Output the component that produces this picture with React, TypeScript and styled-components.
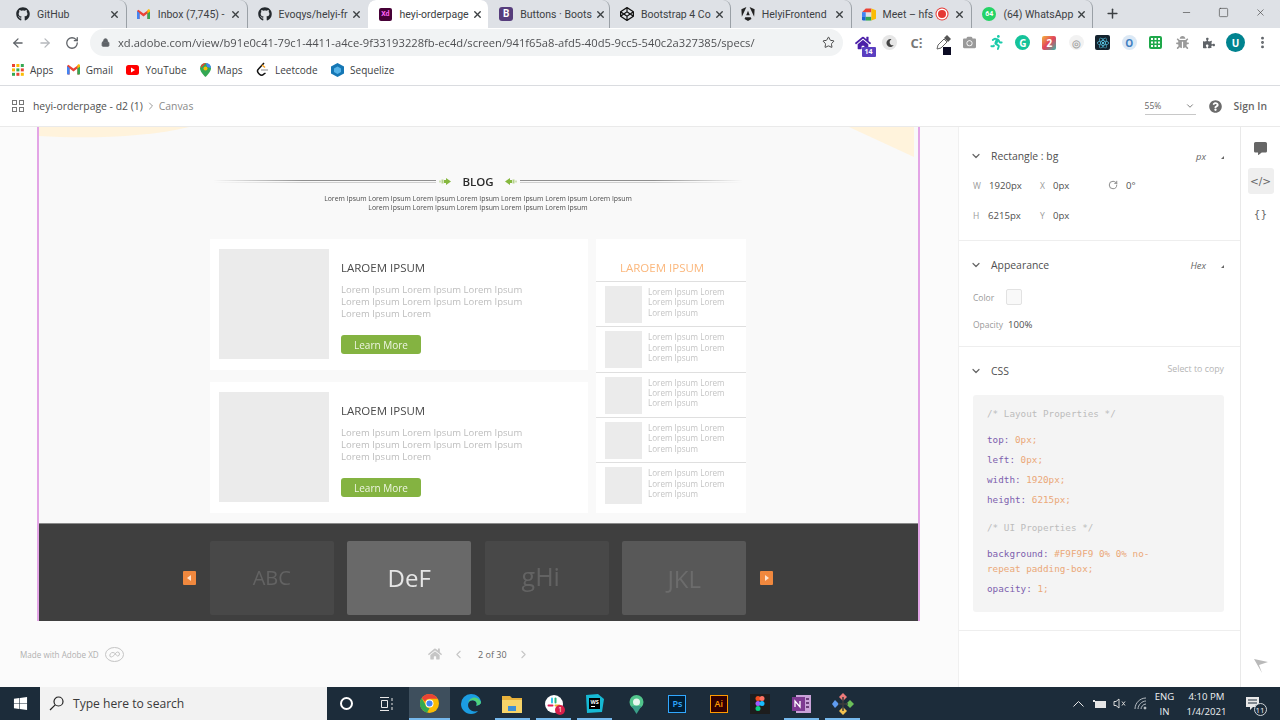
import React from "react";
import styled, { createGlobalStyle } from "styled-components";
import { ArrowLeft, ArrowRight, ChevronDown, ChevronLeft, ChevronRight, Lock, Minus, MoreVertical, Plus, RotateCw, Square, Star, X } from "lucide-react";
import { FaBug, FaCamera, FaCodepen, FaCommentAlt, FaGithub, FaHome, FaMoon, FaPuzzlePiece, FaQuestionCircle, FaReact, FaRunning, FaWindows } from "react-icons/fa";
import { SiAngular } from "react-icons/si";

const GlobalStyle = createGlobalStyle`
    html, body { margin: 0; padding: 0; background: #fff; }
    * { box-sizing: border-box; }
    body { font-family: "Open Sans", "Noto Sans", sans-serif; color: #444; }
`;

const Screen = styled.div`
    width: 1280px;
    height: 720px;
    overflow: hidden;
    display: flex;
    flex-direction: column;
`;

/* browser chrome */
const TabStrip = styled.div`
    height: 28px;
    background: #dee1e6;
    display: flex;
    align-items: stretch;
    padding-left: 6px;
`;
const Tab = styled.div<{ $active?: boolean; $sep?: boolean }>`
    position: relative;
    width: 120.8px;
    display: flex;
    align-items: center;
    padding: 0 5px 0 10px;
    background: ${(p) => (p.$active ? "#fff" : "transparent")};
    border-radius: 8px 8px 0 0;
    border-right: 1px solid ${(p) => (p.$sep ? "#9aa0a6" : "transparent")};
    background-clip: padding-box;
    font-family: Roboto, "Open Sans", sans-serif;
    font-size: 10.5px;
    color: #3c4043;
`;
const TabIcon = styled.span`
    width: 14px;
    height: 14px;
    flex: none;
    display: flex;
    align-items: center;
    justify-content: center;
    font-size: 14px;
    margin-right: 7px;
`;
const TabTitle = styled.span`
    flex: 1;
    white-space: nowrap;
`;
const TabClose = styled(X)`
    width: 11px;
    height: 11px;
    flex: none;
    margin: 0 1px 0 3px;
    color: #3c4043;
    stroke-width: 3;
`;
const RecordDot = styled.span`
    width: 8px;
    height: 8px;
    flex: none;
    border-radius: 50%;
    background: #e53935;
    box-shadow: 0 0 0 1.5px #fff, 0 0 0 2.5px #e53935;
    margin-right: 5px;
`;
const XdBadge = styled.span`
    width: 13px;
    height: 13px;
    border-radius: 2px;
    background: #470137;
    color: #ff61f6;
    font-size: 7px;
    font-weight: 700;
    line-height: 13px;
    text-align: center;
`;
const BootBadge = styled.span`
    width: 14px;
    height: 14px;
    border-radius: 3px;
    background: #563d7c;
    color: #fff;
    font-size: 10px;
    font-weight: 700;
    line-height: 14px;
    text-align: center;
`;
const ChatBadge = styled.span`
    width: 14px;
    height: 14px;
    border-radius: 50%;
    background: #25d366;
    color: #fff;
    font-size: 7px;
    font-weight: 700;
    line-height: 14px;
    text-align: center;
`;
const NewTab = styled(Plus)`
    width: 15px;
    height: 15px;
    margin: 6px 0 0 12px;
    color: #3c4043;
    stroke-width: 2.4;
`;
const WindowControls = styled.div`
    margin-left: auto;
    display: flex;
    align-items: flex-start;
    padding: 7px 14px 0 0;
    gap: 26px;
    color: #444;
    svg { width: 11px; height: 11px; stroke-width: 1.4; }
`;

const Toolbar = styled.div`
    height: 29px;
    display: flex;
    align-items: center;
    padding-left: 11px;
    background: #fff;
`;
const NavButton = styled.span<{ $dim?: boolean }>`
    width: 27px;
    display: flex;
    color: ${(p) => (p.$dim ? "#b5b8bc" : "#5f6368")};
    svg { width: 14px; height: 14px; stroke-width: 2.2; }
`;
const Omnibox = styled.div`
    width: 753px;
    height: 27px;
    margin-left: -2px;
    border-radius: 14px;
    background: #f1f3f4;
    display: flex;
    align-items: center;
    padding: 0 8px 0 11px;
    font-size: 11.2px;
    color: #5f6368;
`;
const Url = styled.span`
    flex: 1;
    margin-left: 8px;
    white-space: nowrap;
    color: #202124;
    opacity: 0.78;
`;
const ExtensionRow = styled.div`
    display: flex;
    align-items: center;
    margin-left: 7px;
`;
const Extension = styled.span`
    position: relative;
    width: 26.6px;
    height: 20px;
    display: flex;
    align-items: center;
    justify-content: center;
    font-size: 13px;
`;
const CornerBadge = styled.span`
    position: absolute;
    right: 1px;
    bottom: -4px;
    min-width: 14px;
    height: 10px;
    padding: 0 1px;
    background: #5a3fc0;
    color: #fff;
    font-size: 7px;
    font-weight: 700;
    line-height: 10px;
    text-align: center;
    border-radius: 1px;
`;
const DotBadge = styled.span`
    position: absolute;
    right: 5px;
    bottom: -2px;
    width: 8px;
    height: 8px;
    background: #0b0b23;
`;
const RoundIcon = styled.span<{ $bg: string; $fg?: string; $size?: number; $font?: number }>`
    width: ${(p) => p.$size ?? 15}px;
    height: ${(p) => p.$size ?? 15}px;
    border-radius: 50%;
    background: ${(p) => p.$bg};
    color: ${(p) => p.$fg ?? "#fff"};
    display: flex;
    align-items: center;
    justify-content: center;
    font-size: ${(p) => p.$font ?? 10}px;
    font-weight: 700;
`;
const SquareIcon = styled(RoundIcon)`
    border-radius: 2px;
`;

const Bookmarks = styled.div`
    height: 29px;
    display: flex;
    align-items: center;
    padding: 0 0 3px 12px;
    border-bottom: 1px solid #dadce0;
    background: #fff;
    font-size: 10px;
    color: #3c4043;
`;
const Bookmark = styled.span`
    display: flex;
    align-items: center;
    gap: 6px;
    margin-right: 13.5px;
    svg { flex: none; }
`;

/* xd header */
const XdHeader = styled.header`
    height: 41px;
    display: flex;
    align-items: center;
    padding: 0 13px 0 12px;
    border-bottom: 1px solid #eaeaea;
    background: #fff;
    font-size: 10.4px;
`;
const DocTitle = styled.span`
    margin-left: 9px;
    color: #505050;
`;
const Crumb = styled.span`
    color: #8a8a8a;
    display: flex;
    align-items: center;
    margin-left: 2px;
`;
const Zoom = styled.span`
    margin-left: auto;
    width: 51px;
    height: 17px;
    border-bottom: 1px solid #c8c8c8;
    display: flex;
    align-items: center;
    justify-content: space-between;
    font-size: 8.5px;
    color: #666;
    svg { width: 10px; height: 10px; margin-right: 1px; }
`;
const Help = styled.span`
    display: flex;
    margin-left: 13px;
    color: #6b6b6b;
    font-size: 13px;
`;
const SignIn = styled.span`
    margin-left: 12px;
    font-weight: 600;
    color: #666;
`;

const Main = styled.div`
    flex: 1;
    display: flex;
    min-height: 0;
`;

/* canvas */
const CanvasPane = styled.div`
    width: 958px;
    display: flex;
    flex-direction: column;
    background: #fbfbfb;
`;
const Artboard = styled.div`
    position: relative;
    width: 883px;
    height: 494px;
    margin-left: 37px;
    border-left: 2px solid #e3a5e6;
    border-right: 2px solid #e3a5e6;
    background: #f9f9f9;
    display: flex;
    flex-direction: column;
    align-items: center;
    overflow: hidden;
`;
const Decor = styled.svg`
    position: absolute;
    top: 0;
    left: 0;
`;
const ArtContent = styled.div`
    width: 536px;
    margin-left: -1px;
    padding-top: 47px;
    position: relative;
    filter: blur(0.35px);
`;
const BlogHeading = styled.div`
    display: flex;
    align-items: center;
    height: 14px;
`;
const HeadingRule = styled.span<{ $flip?: boolean }>`
    flex: 1;
    height: 3px;
    margin: 0 3px;
    border-top: 1px solid #8f8f8f;
    border-bottom: 1px solid #cfcfcf;
    -webkit-mask-image: linear-gradient(${(p) => (p.$flip ? "270deg" : "90deg")}, transparent, #000 40%);
    mask-image: linear-gradient(${(p) => (p.$flip ? "270deg" : "90deg")}, transparent, #000 40%);
`;
const HeadingTitle = styled.span`
    margin: 0 11px;
    font-size: 11.5px;
    font-weight: 600;
    color: #2b2b2b;
`;
const Intro = styled.p`
    margin: 6px 0 0;
    font-size: 6.87px;
    line-height: 9px;
    text-align: center;
    color: #4c4c4c;
`;
const BlogGrid = styled.div`
    display: grid;
    grid-template-columns: 378px 150px;
    gap: 8px;
    margin-top: 27px;
`;
const CardColumn = styled.div`
    display: flex;
    flex-direction: column;
    gap: 12px;
`;
const Card = styled.article`
    height: 131px;
    background: #fff;
    display: flex;
    gap: 12px;
    padding: 10px 9px;
`;
const CardThumb = styled.div`
    width: 110px;
    height: 110px;
    flex: none;
    background: #ebebeb;
`;
const CardBody = styled.div`
    padding-top: 11px;
`;
const CardTitle = styled.h3`
    margin: 0;
    font-size: 11.5px;
    line-height: 16px;
    font-weight: 400;
    color: #4a4a4a;
`;
const CardText = styled.p`
    margin: 8px 0 0;
    width: 190px;
    font-size: 9.5px;
    line-height: 12px;
    color: #bdbdbd;
`;
const LearnMore = styled.span`
    display: flex;
    align-items: center;
    justify-content: center;
    width: 80px;
    height: 19px;
    margin-top: 15px;
    border-radius: 3px;
    background: #84b341;
    color: #eef5e2;
    font-size: 10px;
`;
const Sidebar = styled.aside`
    background: #fff;
    height: 274px;
`;
const SidebarTitle = styled.h4`
    margin: 0;
    height: 42px;
    padding: 20px 0 0 24px;
    font-size: 11.5px;
    line-height: 18px;
    font-weight: 400;
    color: #fbb77c;
`;
const SidebarItem = styled.div`
    height: 45.3px;
    display: flex;
    gap: 6px;
    padding: 4px 0 0 9px;
    border-top: 1px solid #dfdfdf;
`;
const SidebarThumb = styled.div`
    width: 37px;
    height: 37px;
    flex: none;
    background: #ebebeb;
`;
const SidebarText = styled.p`
    margin: 1px 0 0;
    width: 85px;
    font-size: 8.1px;
    line-height: 10.4px;
    color: #c4c4c4;
`;
const Band = styled.div`
    margin-top: auto;
    width: 100%;
    height: 98px;
    background: #3f3f3f;
    border-top: 1px solid #8a8a8a;
    display: flex;
    align-items: flex-start;
    justify-content: center;
    padding: 17px 1px 0 0;
    filter: blur(0.3px);
`;
const BandArrow = styled.span<{ $right?: boolean }>`
    width: 13px;
    height: 14px;
    margin-top: 30px;
    ${(p) => (p.$right ? "margin-left: 14px;" : "margin-right: 14px;")}
    background: #f0883e;
    border-radius: 1px;
    display: flex;
    align-items: center;
    justify-content: center;
    &::after {
        content: "";
        border: 3px solid transparent;
        ${(p) => (p.$right ? "border-left: 4px solid #fde3cf; margin-left: 3px;" : "border-right: 4px solid #fde3cf; margin-right: 3px;")}
    }
`;
const Tiles = styled.div`
    display: flex;
    gap: 13.5px;
`;
const Tile = styled.div<{ $bg: string; $fg: string; $size: number; $shift?: number; $nudge?: number }>`
    width: 124px;
    height: 74px;
    border-radius: 2px;
    background: ${(p) => p.$bg};
    color: ${(p) => p.$fg};
    font-size: ${(p) => p.$size}px;
    padding-bottom: ${(p) => 2 - (p.$shift ?? 0)}px;
    padding-right: ${(p) => p.$nudge ?? 0}px;
    display: flex;
    align-items: center;
    justify-content: center;
`;

const CanvasFooter = styled.div`
    flex: 1;
    display: flex;
    align-items: center;
    padding-left: 20px;
    color: #9c9c9c;
`;
const MadeWith = styled.span`
    width: 408px;
    display: flex;
    align-items: center;
    gap: 6px;
    font-size: 8.1px;
    color: #b0b0b0;
`;
const Pager = styled.div`
    display: flex;
    align-items: center;
    font-size: 9px;
    color: #666;
    svg { color: #c6c6c6; }
`;
const PagerLabel = styled.span`
    margin: 0 10px 0 13px;
`;

/* right panel */
const SidePanel = styled.div`
    width: 282px;
    border-left: 1px solid #f0f0f0;
    background: #fff;
    font-size: 9.6px;
`;
const Section = styled.section<{ $top: number; $bottom: number }>`
    padding: ${(p) => p.$top}px 16px ${(p) => p.$bottom}px 14px;
    border-bottom: 1px solid #eeeeee;
`;
const SectionHead = styled.div`
    height: 18px;
    display: flex;
    align-items: center;
    font-size: 10.4px;
    color: #4f4f4f;
    svg { width: 12px; height: 12px; margin: 0 9px 0 -3px; stroke-width: 2.4; color: #666; }
`;
const HeadHint = styled.span`
    margin-left: auto;
    font-size: 9.4px;
    font-style: italic;
    color: #666;
    display: flex;
    align-items: center;
    &::after {
        content: "";
        margin: 3px 0 0 15px;
        border-style: solid;
        border-width: 0 0 3px 3px;
        border-color: transparent transparent #666 transparent;
    }
`;
const CopyHint = styled.span`
    margin-left: auto;
    margin-top: -4px;
    font-size: 8.8px;
    color: #b5b5b5;
`;
const MeasureRow = styled.div<{ $top: number }>`
    display: flex;
    align-items: center;
    height: 18px;
    margin-top: ${(p) => p.$top}px;
    color: #4f4f4f;
`;
const FieldLabel = styled.span<{ $w: number }>`
    width: ${(p) => p.$w}px;
    font-size: 8.5px;
    color: #9a9a9a;
`;
const FieldValue = styled.span<{ $w: number }>`
    width: ${(p) => p.$w}px;
    font-size: 9.6px;
`;
const RotateIcon = styled(RotateCw)`
    width: 10px;
    height: 10px;
    margin-right: 8px;
    color: #777;
`;
const Swatch = styled.span`
    width: 16px;
    height: 16px;
    margin-left: 14px;
    border: 1px solid #e2e2e2;
    border-radius: 2px;
    background: #f9f9f9;
`;
const CodeBox = styled.div`
    height: 217px;
    margin-top: 15px;
    padding: 11px 50px 0 14px;
    border-radius: 3px;
    background: #f4f4f4;
    font-family: "DejaVu Sans Mono", "Liberation Mono", monospace;
    font-size: 9.3px;
    line-height: 15px;
`;
const CodeLine = styled.div<{ $top: number; $comment?: boolean }>`
    margin-top: ${(p) => p.$top}px;
    color: ${(p) => (p.$comment ? "#bcbcbc" : "#eba878")};
`;
const CodeKey = styled.span`
    color: #7d5fae;
`;

const Rail = styled.div`
    flex: 1;
    border-left: 1px solid #e9e9e9;
    background: #fff;
    display: flex;
    flex-direction: column;
    align-items: center;
    padding-top: 8px;
    color: #666;
`;
const RailButton = styled.span<{ $on?: boolean }>`
    width: 26px;
    height: 26px;
    margin-bottom: 7px;
    border-radius: 3px;
    background: ${(p) => (p.$on ? "#efefef" : "transparent")};
    display: flex;
    align-items: center;
    justify-content: center;
    font-size: 10.5px;
    font-family: "DejaVu Sans", sans-serif;
    svg { width: 13px; height: 13px; }
`;
const RailFlag = styled.svg`
    margin-top: auto;
    margin-bottom: 14px;
`;

/* taskbar */
const Taskbar = styled.footer`
    height: 33px;
    flex: none;
    display: flex;
    align-items: stretch;
    background: #1c2c3a;
    color: #eef1f3;
`;
const StartButton = styled.span`
    width: 40px;
    display: flex;
    align-items: center;
    justify-content: center;
    font-size: 15px;
    color: #fff;
`;
const SearchBox = styled.div`
    width: 287px;
    display: flex;
    align-items: center;
    gap: 9px;
    padding-left: 9px;
    background: #f2f2f2;
    color: #3a3a3a;
    font-size: 12.1px;
`;
const SystemSlot = styled.span<{ $w: number }>`
    width: ${(p) => p.$w}px;
    display: flex;
    align-items: center;
    justify-content: center;
`;
const CortanaRing = styled.span`
    width: 13px;
    height: 13px;
    border: 2px solid #fff;
    border-radius: 50%;
`;
const TaskSlot = styled.span<{ $open?: boolean; $active?: boolean }>`
    position: relative;
    width: 41.3px;
    display: flex;
    align-items: center;
    justify-content: center;
    background: ${(p) => (p.$active ? "#3e4f5d" : "transparent")};
    &::after {
        content: "";
        position: absolute;
        left: ${(p) => (p.$active ? "0" : "3px")};
        right: ${(p) => (p.$active ? "0" : "3px")};
        bottom: 0;
        height: 2px;
        background: ${(p) => (p.$open ? "#76b9ed" : "transparent")};
    }
`;
const AppTile = styled.span<{ $bg: string; $line: string; $fg: string }>`
    width: 18px;
    height: 18px;
    background: ${(p) => p.$bg};
    border: 1px solid ${(p) => p.$line};
    color: ${(p) => p.$fg};
    font-size: 9px;
    font-weight: 600;
    line-height: 16px;
    text-align: center;
`;
const NotifyCount = styled.span`
    position: absolute;
    right: 9px;
    bottom: 5px;
    width: 10px;
    height: 10px;
    border-radius: 50%;
    background: #d81e4a;
    color: #fff;
    font-size: 7px;
    line-height: 10px;
    text-align: center;
`;
const Tray = styled.div`
    margin-left: auto;
    display: flex;
    align-items: center;
    padding-right: 8.5px;
`;
const TrayIcon = styled.span`
    width: 20.5px;
    display: flex;
    justify-content: center;
`;
const TrayText = styled.span<{ $w: number }>`
    width: ${(p) => p.$w}px;
    text-align: center;
    font-size: 9.6px;
    line-height: 15px;
`;
const NotifyButton = styled.span`
    position: relative;
    width: 37px;
    display: flex;
    justify-content: center;
`;
const NotifyBubble = styled.span`
    position: absolute;
    right: 5px;
    bottom: -5px;
    width: 13px;
    height: 13px;
    border: 1px solid #cfd4d8;
    border-radius: 50%;
    background: #1c2c3a;
    font-size: 8px;
    line-height: 11px;
    text-align: center;
`;

const GmailMark = ({ size = 13 }: { size?: number }) => (
    <svg width={size} height={size * 0.8} viewBox="0 0 20 16">
        <path d="M0 3v11.5A1.5 1.5 0 0 0 1.500 16H4V7l6 4.500L16 7v9h2.500A1.500 1.500 0 0 0 20 14.500V3l-2-2-8 6-8-6z" fill="#ea4335" />
        <path d="M0 3v11.500A1.500 1.500 0 0 0 1.500 16H4V6z" fill="#4285f4" />
        <path d="M16 6v10h2.500a1.500 1.500 0 0 0 1.500-1.500V3z" fill="#34a853" />
        <path d="M16 2.500V7l4-3V2.500C20 .6 18 0 16.800.6z" fill="#fbbc04" />
    </svg>
);

const MeetMark = () => (
    <svg width="15" height="13" viewBox="0 0 15 13">
        <path d="M0 4l4-4h6v4z" fill="#ea4335" />
        <path d="M0 4h4v5H0z" fill="#4285f4" />
        <path d="M0 9h4v4H1.500A1.500 1.500 0 0 1 0 11.500z" fill="#1967d2" />
        <path d="M4 9h6v4H4z" fill="#34a853" />
        <path d="M10 0v13l5-2V2z" fill="#fbbc04" />
    </svg>
);

const ChromeMark = () => (
    <svg width="19" height="19" viewBox="0 0 20 20">
        <circle cx="10" cy="10" r="10" fill="#fbbc04" />
        <path d="M10 0a10 10 0 0 1 8.660 5H10a5 5 0 0 0-4.700 3.200L1.800 4.200A10 10 0 0 1 10 0z" fill="#ea4335" />
        <path d="M1.800 4.200l4 7A5 5 0 0 0 10 15l-2.600 4.700A10 10 0 0 1 1.800 4.200z" fill="#34a853" />
        <circle cx="10" cy="10" r="4.200" fill="#fff" />
        <circle cx="10" cy="10" r="3.200" fill="#4285f4" />
    </svg>
);

const EdgeMark = () => (
    <svg width="20" height="20" viewBox="0 0 20 20">
        <path d="M10 0a10 10 0 0 0-10 10c0 5.500 4.500 10 10 10 3 0 5.500-1 7-3-3 1-8 .5-9.500-3.500C6 9 9 5 13 6.500c3 1 3.500 4 2 5 2 .5 5-1 5-3.500C19.500 3 15 0 10 0z" fill="#1b9de2" />
        <path d="M20 8c0 2.500-3 4-5 3.500 1.500-1 1-4-2-5C10 5.500 7.600 7 7 9.600 8 3 16 1 20 8z" fill="#4fd27a" />
    </svg>
);

const FolderMark = () => (
    <svg width="20" height="18" viewBox="0 0 20 18">
        <path d="M0 1h8l2 2h10v3H0z" fill="#e8b23c" />
        <path d="M0 5h20v13H0z" fill="#f6d469" />
        <path d="M6 11h8v5H6z" fill="#3d8fd6" />
    </svg>
);

const SlackMark = () => (
    <svg width="18" height="18" viewBox="0 0 18 18">
        <circle cx="9" cy="9" r="9" fill="#fff" />
        <path d="M7 3.500v4" stroke="#36c5f0" strokeWidth="2" strokeLinecap="round" />
        <path d="M10.500 3.500v4" stroke="#2eb67d" strokeWidth="2" strokeLinecap="round" />
        <path d="M3.500 10.500h4" stroke="#e01e5a" strokeWidth="2" strokeLinecap="round" />
        <path d="M10.500 10.500h4" stroke="#ecb22e" strokeWidth="2" strokeLinecap="round" />
    </svg>
);

const StormMark = () => (
    <svg width="19" height="19" viewBox="0 0 19 19">
        <path d="M1 1l12-1 6 5-2 13-15 1z" fill="#16b9d4" />
        <path d="M4 4h11v11H4z" fill="#000" />
        <path d="M6 12.500h4" stroke="#fff" strokeWidth="1" />
        <text x="5.500" y="10" fontSize="5.500" fontWeight="700" fill="#fff" fontFamily="Open Sans">WS</text>
    </svg>
);

const KrakenMark = () => (
    <svg width="19" height="20" viewBox="0 0 19 20">
        <circle cx="9.500" cy="8" r="7" fill="#52c58c" />
        <circle cx="9.500" cy="8" r="3.500" fill="#e6f6ee" />
        <path d="M9.500 20l-5-8h10z" fill="#3a9f88" />
    </svg>
);

const FigmaMark = () => (
    <svg width="20" height="20" viewBox="0 0 20 20">
        <path d="M0 0h20v20H0z" fill="#1d1d1d" />
        <circle cx="8" cy="4.500" r="2.500" fill="#f24e1e" />
        <circle cx="12" cy="4.500" r="2.500" fill="#ff7262" />
        <circle cx="8" cy="9.500" r="2.500" fill="#a259ff" />
        <circle cx="12" cy="9.500" r="2.500" fill="#1abcfe" />
        <circle cx="8" cy="14.500" r="2.500" fill="#0acf83" />
    </svg>
);

const NoteMark = () => (
    <svg width="19" height="18" viewBox="0 0 19 18">
        <path d="M4 0h15v18H4z" fill="#c9a2d8" />
        <path d="M0 2h13v14H0z" fill="#7e3a92" />
        <path d="M3 12V6l5 6V6" stroke="#fff" strokeWidth="1.300" fill="none" />
        <path d="M14 4h3M14 8h3M14 12h3" stroke="#4d1e5c" strokeWidth="1.300" />
    </svg>
);

const GitMark = () => (
    <svg width="22" height="22" viewBox="0 0 22 22">
        <path d="M11 0l4 4-4 4-4-4z" fill="#ef7b7b" />
        <path d="M3 7l4 4-4 4-3-4z" fill="#5f9cf0" />
        <path d="M18 7l4 4-4 4-4-4z" fill="#6bbf59" />
        <path d="M11 14l4 4-4 4-4-4z" fill="#f2c14e" />
        <path d="M11 4v14M6 11h10" stroke="#3c3c3c" strokeWidth="1.500" />
    </svg>
);

const AppsGrid = () => (
    <svg width="12" height="12" viewBox="0 0 12 12">
        {[0, 1, 2].flatMap((r) =>
            [0, 1, 2].map((c) => (
                <rect key={`${r}${c}`} x={c * 4.4} y={r * 4.4} width="3" height="3" fill={["#ea4335", "#fbbc04", "#34a853"][(r + c) % 3]} />
            ))
        )}
    </svg>
);

const MapPin = () => (
    <svg width="11" height="14" viewBox="0 0 11 14">
        <path d="M5.500 0A5.500 5.500 0 0 0 0 5.500C0 9 5.500 14 5.500 14S11 9 11 5.500A5.500 5.500 0 0 0 5.500 0z" fill="#34a853" />
        <path d="M1 3a5.500 5.500 0 0 1 5-3l-5 5z" fill="#ea4335" />
        <path d="M6 0a5.500 5.500 0 0 1 5 5L7 4z" fill="#4285f4" />
        <circle cx="5.500" cy="5.500" r="2" fill="#fbbc04" />
    </svg>
);

const YoutubeMark = () => (
    <svg width="13" height="10" viewBox="0 0 13 10">
        <rect width="13" height="10" rx="2.500" fill="#f00" />
        <path d="M5 2.500v5l4-2.500z" fill="#fff" />
    </svg>
);

const LeetMark = () => (
    <svg width="13" height="15" viewBox="0 0 13 15">
        <path d="M8 1L2.500 7a3 3 0 0 0 0 4.200l1 1a3 3 0 0 0 4.200 0L9.500 11" stroke="#111" strokeWidth="1.500" fill="none" />
        <path d="M5 8h7" stroke="#b3b3b3" strokeWidth="1.500" />
        <path d="M6 3l3 2.500" stroke="#f89f1b" strokeWidth="1.500" />
    </svg>
);

const CubeMark = () => (
    <svg width="13" height="14" viewBox="0 0 13 14">
        <path d="M6.500 0L13 3.500v7L6.500 14 0 10.500v-7z" fill="#1577b5" />
        <path d="M6.500 3.500L10 5.500v3.500l-3.500 2L3 9V5.500z" fill="#55b3e8" />
    </svg>
);

const CloudMark = () => (
    <svg width="19" height="15" viewBox="0 0 19 15" fill="none" stroke="#c4c4c4">
        <ellipse cx="9.500" cy="7.500" rx="9" ry="7" />
        <path d="M5 9.500a3 3 0 0 1 3-4c2 0 3 3 4.500 3.500a2 2 0 0 0 0-4c-2 0-3 4-5 4.500a2 2 0 0 1-2.500 0z" />
    </svg>
);

const GridGlyph = () => (
    <svg width="12" height="12" viewBox="0 0 12 12" fill="none" stroke="#777">
        <rect x=".5" y=".5" width="4" height="4" />
        <rect x="7.500" y=".5" width="4" height="4" />
        <rect x=".5" y="7.500" width="4" height="4" />
        <rect x="7.500" y="7.500" width="4" height="4" />
    </svg>
);

const DropperMark = () => (
    <svg width="15" height="15" viewBox="0 0 15 15">
        <path d="M1 14l1-4 6-6 3 3-6 6z" fill="#fff" stroke="#666" />
        <path d="M8 3l3-3 4 4-3 3z" fill="#555" />
    </svg>
);

const ArrowBurst = ({ flip }: { flip?: boolean }) => (
    <svg width="12" height="7" viewBox="0 0 12 7" style={flip ? { transform: "scaleX(-1)" } : undefined}>
        <path d="M0 2.500h2v2H0z" fill="#86b83f" opacity=".35" />
        <path d="M2.500 1.500h2v4h-2z" fill="#86b83f" opacity=".6" />
        <path d="M5 2h2V0l5 3.500L7 7V5H5z" fill="#86b83f" />
    </svg>
);

const tabs = [
    { title: "GitHub", icon: <FaGithub color="#24292e" />, sep: true },
    { title: "Inbox (7,745) -", icon: <GmailMark />, sep: true },
    { title: "Evoqys/helyi-fr", icon: <FaGithub color="#24292e" /> },
    { title: "heyi-orderpage", icon: <XdBadge>Xd</XdBadge>, active: true },
    { title: "Buttons · Boots", icon: <BootBadge>B</BootBadge>, sep: true },
    { title: "Bootstrap 4 Co", icon: <FaCodepen color="#111" />, sep: true },
    { title: "HelyiFrontend", icon: <SiAngular color="#222" />, sep: true },
    { title: "Meet – hfs", icon: <MeetMark />, rec: true, sep: true },
    { title: "(64) WhatsApp", icon: <ChatBadge>64</ChatBadge>, sep: true },
];

const lorem = "Lorem Ipsum Lorem Ipsum Lorem Ipsum Lorem Ipsum Lorem Ipsum Lorem Ipsum Lorem Ipsum";
const lorem2 = "Lorem Ipsum Lorem Ipsum Lorem Ipsum Lorem Ipsum Lorem Ipsum";
const cardText = "Lorem Ipsum Lorem Ipsum Lorem Ipsum Lorem Ipsum Lorem Ipsum Lorem Ipsum Lorem Ipsum Lorem";
const sideText = "Lorem Ipsum Lorem Lorem Ipsum Lorem Lorem Ipsum";

const BlogCard = () => (
    <Card>
        <CardThumb />
        <CardBody>
            <CardTitle>LAROEM IPSUM</CardTitle>
            <CardText>{cardText}</CardText>
            <LearnMore>Learn More</LearnMore>
        </CardBody>
    </Card>
);

const App = () => {
    return (
        <Screen>
            <GlobalStyle />
            <TabStrip>
                {tabs.map((t) => (
                    <Tab key={t.title} $active={t.active} $sep={t.sep}>
                        <TabIcon>{t.icon}</TabIcon>
                        <TabTitle>{t.title}</TabTitle>
                        {t.rec && <RecordDot />}
                        <TabClose />
                    </Tab>
                ))}
                <NewTab />
                <WindowControls>
                    <Minus />
                    <Square />
                    <X />
                </WindowControls>
            </TabStrip>

            <Toolbar>
                <NavButton><ArrowLeft /></NavButton>
                <NavButton $dim><ArrowRight /></NavButton>
                <NavButton><RotateCw /></NavButton>
                <Omnibox>
                    <Lock size={9} fill="#5f6368" strokeWidth={2.5} />
                    <Url>xd.adobe.com/view/b91e0c41-79c1-4411-a4ce-9f33193228fb-ec4d/screen/941f65a8-afd5-40d5-9cc5-540c2a327385/specs/</Url>
                    <Star size={13} strokeWidth={1.8} color="#444" />
                </Omnibox>
                <ExtensionRow>
                    <Extension><FaHome color="#4b1fa8" size={16} /><CornerBadge>14</CornerBadge></Extension>
                    <Extension><RoundIcon $bg="#e6e6e6" $fg="#444"><FaMoon size={8} /></RoundIcon></Extension>
                    <Extension><RoundIcon $bg="transparent" $fg="#777" $font={13}>C⁝</RoundIcon></Extension>
                    <Extension><DropperMark /><DotBadge /></Extension>
                    <Extension><FaCamera color="#9a9a9a" /></Extension>
                    <Extension><FaRunning color="#1bcbab" size={15} /></Extension>
                    <Extension><RoundIcon $bg="#15c39a">G</RoundIcon></Extension>
                    <Extension><SquareIcon $bg="linear-gradient(135deg,#f3b33d,#e2445c 50%,#38b6a8)" $size={14}>2</SquareIcon></Extension>
                    <Extension><RoundIcon $bg="#f2f2f2" $fg="#aaa">◎</RoundIcon></Extension>
                    <Extension><SquareIcon $bg="#14232e" $size={15}><FaReact color="#61dafb" size={12} /></SquareIcon></Extension>
                    <Extension><RoundIcon $bg="#dbe8f5" $fg="#3f7fc1">O</RoundIcon></Extension>
                    <Extension><SquareIcon $bg="#1ea84a" $size={13}><svg width="9" height="9" viewBox="0 0 9 9" fill="#fff"><path d="M0 0h2v2H0zM3.500 0h2v2h-2zM7 0h2v2H7zM0 3.500h2v2H0zM3.500 3.500h2v2h-2zM7 3.500h2v2H7zM0 7h2v2H0zM3.500 7h2v2h-2zM7 7h2v2H7z" /></svg></SquareIcon></Extension>
                    <Extension><FaBug color="#9a9a9a" /></Extension>
                    <Extension><FaPuzzlePiece color="#5f6368" size={12} /></Extension>
                    <Extension><RoundIcon $bg="#00838f" $size={19}>U</RoundIcon></Extension>
                    <Extension><MoreVertical size={15} color="#5f6368" strokeWidth={2.6} /></Extension>
                </ExtensionRow>
            </Toolbar>

            <Bookmarks>
                <Bookmark><AppsGrid />Apps</Bookmark>
                <Bookmark><GmailMark />Gmail</Bookmark>
                <Bookmark><YoutubeMark />YouTube</Bookmark>
                <Bookmark><MapPin />Maps</Bookmark>
                <Bookmark><LeetMark />Leetcode</Bookmark>
                <Bookmark><CubeMark />Sequelize</Bookmark>
            </Bookmarks>

            <XdHeader>
                <GridGlyph />
                <DocTitle>heyi-orderpage - d2 (1)</DocTitle>
                <ChevronRight size={12} color="#9a9a9a" style={{ marginLeft: 2 }} />
                <Crumb>Canvas</Crumb>
                <Zoom>55%<ChevronDown /></Zoom>
                <Help><FaQuestionCircle /></Help>
                <SignIn>Sign In</SignIn>
            </XdHeader>

            <Main>
                <CanvasPane>
                    <Artboard>
                        <Decor width="879" height="40" viewBox="0 0 879 40">
                            <path d="M0 0h150C110 10 50 12 0 9z" fill="#fff3dc" />
                            <path d="M810 0h65v30z" fill="#fff3dc" />
                        </Decor>
                        <ArtContent>
                            <BlogHeading>
                                <HeadingRule />
                                <ArrowBurst />
                                <HeadingTitle>BLOG</HeadingTitle>
                                <ArrowBurst flip />
                                <HeadingRule $flip />
                            </BlogHeading>
                            <Intro>{lorem}<br />{lorem2}</Intro>
                            <BlogGrid>
                                <CardColumn>
                                    <BlogCard />
                                    <BlogCard />
                                </CardColumn>
                                <Sidebar>
                                    <SidebarTitle>LAROEM IPSUM</SidebarTitle>
                                    {[0, 1, 2, 3, 4].map((i) => (
                                        <SidebarItem key={i}>
                                            <SidebarThumb />
                                            <SidebarText>{sideText}</SidebarText>
                                        </SidebarItem>
                                    ))}
                                </Sidebar>
                            </BlogGrid>
                        </ArtContent>
                        <Band>
                            <BandArrow />
                            <Tiles>
                                <Tile $bg="#484848" $fg="#636363" $size={20}>ABC</Tile>
                                <Tile $bg="#696969" $fg="#e6e6e6" $size={24}>DeF</Tile>
                                <Tile $bg="#484848" $fg="#636363" $size={25} $shift={-3} $nudge={12}>gHi</Tile>
                                <Tile $bg="#585858" $fg="#6c6c6c" $size={24} $shift={2}>JKL</Tile>
                            </Tiles>
                            <BandArrow $right />
                        </Band>
                    </Artboard>
                    <CanvasFooter>
                        <MadeWith>Made with Adobe XD <CloudMark /></MadeWith>
                        <Pager>
                            <FaHome size={14} />
                            <ChevronLeft size={13} style={{ marginLeft: 10 }} />
                            <PagerLabel>2 of 30</PagerLabel>
                            <ChevronRight size={13} />
                        </Pager>
                    </CanvasFooter>
                </CanvasPane>

                <SidePanel>
                    <Section $top={20} $bottom={16}>
                        <SectionHead><ChevronDown />Rectangle : bg<HeadHint>px</HeadHint></SectionHead>
                        <MeasureRow $top={11}>
                            <FieldLabel $w={16}>W</FieldLabel>
                            <FieldValue $w={51}>1920px</FieldValue>
                            <FieldLabel $w={13}>X</FieldLabel>
                            <FieldValue $w={55}>0px</FieldValue>
                            <RotateIcon />
                            <FieldValue $w={20}>0°</FieldValue>
                        </MeasureRow>
                        <MeasureRow $top={12}>
                            <FieldLabel $w={15}>H</FieldLabel>
                            <FieldValue $w={52}>6215px</FieldValue>
                            <FieldLabel $w={13}>Y</FieldLabel>
                            <FieldValue $w={60}>0px</FieldValue>
                        </MeasureRow>
                    </Section>
                    <Section $top={15} $bottom={13}>
                        <SectionHead><ChevronDown />Appearance<HeadHint>Hex</HeadHint></SectionHead>
                        <MeasureRow $top={14}>
                            <FieldLabel $w={19}>Color</FieldLabel>
                            <Swatch />
                        </MeasureRow>
                        <MeasureRow $top={9}>
                            <FieldLabel $w={35}>Opacity</FieldLabel>
                            <FieldValue $w={40}>100%</FieldValue>
                        </MeasureRow>
                    </Section>
                    <Section $top={15} $bottom={18}>
                        <SectionHead><ChevronDown />CSS<CopyHint>Select to copy</CopyHint></SectionHead>
                        <CodeBox>
                            <CodeLine $top={0} $comment>/* Layout Properties */</CodeLine>
                            <CodeLine $top={11}><CodeKey>top:</CodeKey> 0px;</CodeLine>
                            <CodeLine $top={5}><CodeKey>left:</CodeKey> 0px;</CodeLine>
                            <CodeLine $top={5}><CodeKey>width:</CodeKey> 1920px;</CodeLine>
                            <CodeLine $top={5}><CodeKey>height:</CodeKey> 6215px;</CodeLine>
                            <CodeLine $top={13} $comment>/* UI Properties */</CodeLine>
                            <CodeLine $top={11}><CodeKey>background:</CodeKey> #F9F9F9 0% 0% no-repeat padding-box;</CodeLine>
                            <CodeLine $top={5}><CodeKey>opacity:</CodeKey> 1;</CodeLine>
                        </CodeBox>
                    </Section>
                </SidePanel>

                <Rail>
                    <RailButton><FaCommentAlt /></RailButton>
                    <RailButton $on>&lt;/&gt;</RailButton>
                    <RailButton>{"{}"}</RailButton>
                    <RailFlag width="14" height="14" viewBox="0 0 14 14">
                        <path d="M0 0l14 3-9 3 3 8z" fill="#b9b9b9" />
                    </RailFlag>
                </Rail>
            </Main>

            <Taskbar>
                <StartButton><FaWindows /></StartButton>
                <SearchBox>
                    <svg width="15" height="15" viewBox="0 0 15 15" fill="none" stroke="#222" strokeWidth="1.200">
                        <circle cx="9.500" cy="5.500" r="4.500" />
                        <path d="M6.200 8.800L1 14" />
                    </svg>
                    Type here to search
                </SearchBox>
                <SystemSlot $w={39}><CortanaRing /></SystemSlot>
                <SystemSlot $w={40}>
                    <svg width="15" height="14" viewBox="0 0 15 14" fill="none" stroke="#e8e8e8">
                        <path d="M1 .5h9M1 13.500h9M2.500 3.500h6v7h-6zM13 1v3M13 6v2M13 10v3" />
                    </svg>
                </SystemSlot>
                <SystemSlot $w={3} />
                <TaskSlot $open $active><ChromeMark /></TaskSlot>
                <TaskSlot><EdgeMark /></TaskSlot>
                <TaskSlot $open><FolderMark /></TaskSlot>
                <TaskSlot $open><SlackMark /><NotifyCount>1</NotifyCount></TaskSlot>
                <TaskSlot $open><StormMark /></TaskSlot>
                <TaskSlot><KrakenMark /></TaskSlot>
                <TaskSlot><AppTile $bg="#001e36" $line="#31a8ff" $fg="#31a8ff">Ps</AppTile></TaskSlot>
                <TaskSlot><AppTile $bg="#330000" $line="#ff9a00" $fg="#ff9a00">Ai</AppTile></TaskSlot>
                <TaskSlot><FigmaMark /></TaskSlot>
                <TaskSlot $open><NoteMark /></TaskSlot>
                <TaskSlot $open><GitMark /></TaskSlot>
                <Tray>
                    <TrayIcon>
                        <svg width="11" height="7" viewBox="0 0 11 7" fill="none" stroke="#e6e6e6"><path d="M.5 6.500l5-5 5 5" /></svg>
                    </TrayIcon>
                    <TrayIcon>
                        <svg width="13" height="9" viewBox="0 0 13 9"><path d="M0 1h2v2H0zM2 2h11v7H2z" fill="#e6e6e6" /></svg>
                    </TrayIcon>
                    <TrayIcon>
                        <svg width="13" height="11" viewBox="0 0 13 11" fill="none" stroke="#d8d8d8"><path d="M1 3.500h2L6 1v9L3 7.500H1zM9 3.500l3 4M12 3.500l-3 4" /></svg>
                    </TrayIcon>
                    <TrayIcon>
                        <svg width="13" height="13" viewBox="0 0 13 13" fill="none" stroke="#b5bcc2"><path d="M1 12C1 6 6 1 12 1M4 12c0-4 4-8 8-8M7 12c0-2 2-5 5-5" /><circle cx="11" cy="11" r="1" fill="#e6e6e6" /></svg>
                    </TrayIcon>
                    <TrayText $w={28}>ENG<br />IN</TrayText>
                    <TrayText $w={56}>4:10 PM<br />1/4/2021</TrayText>
                    <NotifyButton>
                        <svg width="15" height="14" viewBox="0 0 15 14"><path d="M0 0h13v10H7l-3 3v-3H0z" fill="#e8e8e8" /><path d="M2 3h9M2 6h9" stroke="#1c2c3a" /></svg>
                        <NotifyBubble>11</NotifyBubble>
                    </NotifyButton>
                </Tray>
            </Taskbar>
        </Screen>
    );
};

export default App;
